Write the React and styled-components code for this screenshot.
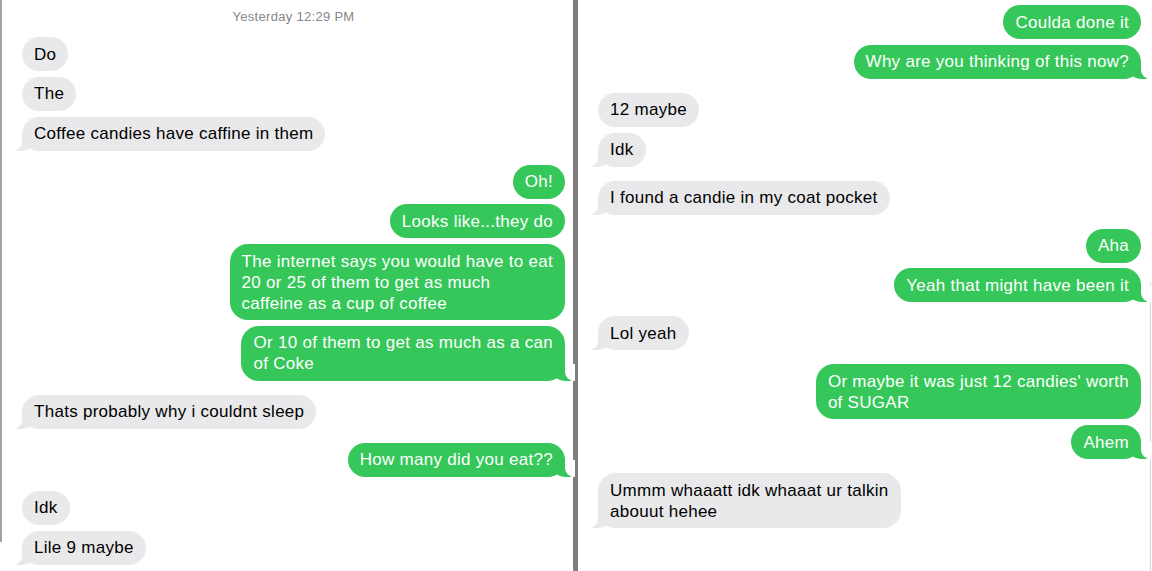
import styled, { createGlobalStyle, css } from 'styled-components';

const GlobalStyle = createGlobalStyle`
  html, body {
    margin: 0;
    padding: 0;
    background: #ffffff;
    overflow: hidden;
  }
  body {
    font-family: "Liberation Sans", Arial, sans-serif;
    -webkit-font-smoothing: antialiased;
  }
`;

const GREEN = '#35c759';
const GREY = '#e9e9eb';

const leftThread = [
  { sent: false, items: ['Do', 'The', 'Coffee candies have caffine in them'] },
  {
    sent: true,
    items: [
      'Oh!',
      'Looks like...they do',
      ['The internet says you would have to eat', '20 or 25 of them to get as much', 'caffeine as a cup of coffee'],
      ['Or 10 of them to get as much as a can', 'of Coke'],
    ],
  },
  { sent: false, items: ['Thats probably why i couldnt sleep'] },
  { sent: true, items: ['How many did you eat??'] },
  { sent: false, items: ['Idk', 'Lile 9 maybe'] },
];

const rightThread = [
  { sent: true, items: ['Coulda done it', 'Why are you thinking of this now?'] },
  { sent: false, items: ['12 maybe', 'Idk'] },
  { sent: false, items: ['I found a candie in my coat pocket'] },
  { sent: true, items: ['Aha', 'Yeah that might have been it'] },
  { sent: false, items: ['Lol yeah'] },
  { sent: true, items: [["Or maybe it was just 12 candies' worth", 'of SUGAR'], 'Ahem'] },
  { sent: false, items: [['Ummm whaaatt idk whaaat ur talkin', 'abouut hehee']] },
];

function Thread({ groups }) {
  return groups.map((group, gi) => (
    <Group key={gi} $sent={group.sent}>
      {group.items.map((text, i) => {
        const lines = Array.isArray(text) ? text : [text];
        return (
          <Bubble key={i} $sent={group.sent} $tail={i === group.items.length - 1}>
            {lines.map((line, li) => (
              <Line key={li}>{line}</Line>
            ))}
          </Bubble>
        );
      })}
    </Group>
  ));
}

export default function App() {
  return (
    <>
      <GlobalStyle />
      <Page>
        <LeftPanel>
          <Timestamp>Yesterday 12:29 PM</Timestamp>
          <Thread groups={leftThread} />
        </LeftPanel>
        <Divider />
        <RightPanel>
          <Thread groups={rightThread} />
        </RightPanel>
      </Page>
    </>
  );
}

const Page = styled.div`
  display: grid;
  grid-template-columns: 573px 5px 1fr;
  width: 1152px;
  height: 571px;
  overflow: hidden;
`;

const LeftPanel = styled.section`
  display: flex;
  flex-direction: column;
  gap: 14px;
  padding: 9px 8px 0 22px;
  background: #fff linear-gradient(#a3a3a3, #a3a3a3) no-repeat 0 0 / 2px 542px;
`;

const RightPanel = styled.section`
  display: flex;
  flex-direction: column;
  gap: 14px;
  padding: 5px 11px 0 20px;
  background: #fff linear-gradient(#d6d6d6, #d6d6d6) no-repeat right 1px top 282px / 1px 100%;
`;

const Divider = styled.div`
  background: #7e7e7e;
`;

const Timestamp = styled.div`
  align-self: center;
  margin: 0 0 -2px 0;
  font-size: 13px;
  line-height: 16px;
  letter-spacing: 0.3px;
  color: #86868b;
`;

const Group = styled.div`
  display: flex;
  flex-direction: column;
  gap: 5.8px;
  align-items: ${(p) => (p.$sent ? 'flex-end' : 'flex-start')};
`;

const sentTail = css`
  &::before {
    content: '';
    position: absolute;
    z-index: -1;
    right: -6px;
    bottom: 0;
    width: 20px;
    height: 17px;
    background: ${GREEN};
    border-bottom-left-radius: 15px 13px;
  }
  &::after {
    content: '';
    position: absolute;
    z-index: -1;
    right: -10px;
    bottom: 0;
    width: 10px;
    height: 17px;
    background: #fff;
    border-bottom-left-radius: 9px;
  }
`;

const receivedTail = css`
  &::before {
    content: '';
    position: absolute;
    z-index: -1;
    left: -6px;
    bottom: 0;
    width: 20px;
    height: 17px;
    background: ${GREY};
    border-bottom-right-radius: 15px 13px;
  }
  &::after {
    content: '';
    position: absolute;
    z-index: -1;
    left: -10px;
    bottom: 0;
    width: 10px;
    height: 17px;
    background: #fff;
    border-bottom-right-radius: 9px;
  }
`;

const Bubble = styled.div`
  position: relative;
  z-index: 0;
  padding: 6.5px 12px;
  border-radius: 18px;
  font-size: 17px;
  line-height: 21px;
  letter-spacing: 0.28px;
  white-space: nowrap;
  background: ${(p) => (p.$sent ? GREEN : GREY)};
  color: ${(p) => (p.$sent ? '#ffffff' : '#000000')};
  ${(p) => p.$tail && (p.$sent ? sentTail : receivedTail)}
`;

const Line = styled.div``;
